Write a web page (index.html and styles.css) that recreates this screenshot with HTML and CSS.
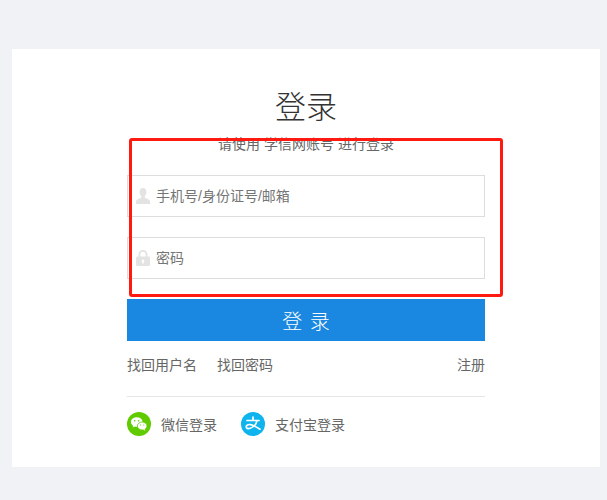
FILE: index.html
```html
<!DOCTYPE html>
<html lang="zh-CN">
<head>
<meta charset="utf-8">
<title>登录</title>
<link rel="stylesheet" href="styles.css">
</head>
<body>
<main class="card">
  <h1 class="title">登录</h1>
  <p class="subtitle">请使用 学信网账号 进行登录</p>
  <form class="form">
    <label class="field">
      <svg class="field-icon" viewBox="0 0 14 16" width="14" height="16"><path fill="#e3e3e3" d="M7 0C4.900 0 3.600 1.700 3.600 3.900c0 1.700.7 3.200 1.600 4v1.300c0 .5-.4.8-1 1.100C2.300 11 .3 11.700 0 13.300V16h14v-2.700c-.3-1.600-2.300-2.300-4.200-3-.6-.3-1-.6-1-1.100V7.900c.9-.8 1.600-2.300 1.600-4C10.400 1.700 9.100 0 7 0z"/></svg>
      <input class="input" type="text" placeholder="手机号/身份证号/邮箱">
    </label>
    <label class="field">
      <svg class="field-icon" viewBox="0 0 14 16" width="14" height="16"><path fill="#e3e3e3" fill-rule="evenodd" d="M7 0C4.300 0 2.500 1.900 2.500 4.500V6.500H1.500C.7 6.500 0 7.100 0 8v6.500C0 15.400.7 16 1.500 16h11c.8 0 1.500-.6 1.500-1.500V8c0-.9-.7-1.500-1.500-1.500h-1V4.500C11.500 1.900 9.700 0 7 0zM4.300 6.500V4.500C4.300 2.900 5.400 1.700 7 1.700s2.700 1.200 2.700 2.800v2H4.300zM7 9.500a1.300 1.300 0 0 1 .7 2.400V13.500H6.300v-1.600A1.300 1.300 0 0 1 7 9.500z"/></svg>
      <input class="input" type="password" placeholder="密码">
    </label>
    <button class="submit" type="button">登 录</button>
  </form>
  <nav class="links">
    <a class="link" href="#">找回用户名</a>
    <a class="link" href="#">找回密码</a>
    <a class="link link-end" href="#">注册</a>
  </nav>
  <div class="social">
    <a class="social-item" href="#">
      <svg class="social-icon" viewBox="0 0 24 24" width="24" height="24">
        <circle cx="12" cy="12" r="12" fill="#5fcb00"/>
        <ellipse cx="9.700" cy="10" rx="5.800" ry="4.800" fill="#fff"/>
        <path fill="#fff" d="M6.500 13l-.8 2.400 2.800-1.300z"/>
        <ellipse cx="15.200" cy="14" rx="4.800" ry="4" fill="#fff" stroke="#5fcb00" stroke-width=".8"/>
        <path fill="#fff" d="M17.500 17l.8 1.800-2.400-1.100z"/>
        <circle cx="7.700" cy="8.700" r=".8" fill="#5fcb00"/>
        <circle cx="11.600" cy="8.700" r=".8" fill="#5fcb00"/>
        <circle cx="13.600" cy="13" r=".6" fill="#5fcb00"/>
        <circle cx="16.800" cy="13" r=".6" fill="#5fcb00"/>
      </svg>
      <span>微信登录</span>
    </a>
    <a class="social-item" href="#">
      <svg class="social-icon" viewBox="0 0 24 24" width="24" height="24">
        <circle cx="12" cy="12" r="12" fill="#0fb4ee"/>
        <path fill="none" stroke="#fff" stroke-width="1.700" stroke-linecap="round" d="M6 8.500h12M12 5v3.500M16 8.700c-.9 3.600-3.600 6.600-6.900 7.600-2.200.7-3.900 0-3.900-1.500 0-1.700 2-2.600 4.300-2.200 3.200.6 6.500 2.700 9.500 4.600"/>
      </svg>
      <span>支付宝登录</span>
    </a>
  </div>
</main>
<div class="annotation"></div>
</body>
</html>
```

FILE: styles.css
```css
* {
  box-sizing: border-box;
}

html,
body {
  margin: 0;
  height: 500px;
  overflow: hidden;
}

body {
  position: relative;
  padding: 49px 7px 0 12px;
  background: #f0f2f5;
  font-family: "Liberation Sans", "Noto Sans CJK SC", sans-serif;
  color: #666;
}

.card {
  height: 418px;
  padding: 41px 115px 0;
  background: #fff;
}

.title {
  margin: 0;
  height: 36px;
  font-size: 31px;
  line-height: 36px;
  font-weight: 300;
  text-align: center;
  color: #333;
}

.subtitle {
  margin: 11px 0 0;
  height: 14px;
  font-size: 14px;
  line-height: 14px;
  text-align: center;
  color: #666;
}

.form {
  display: flex;
  flex-direction: column;
  margin-top: 24px;
}

.field {
  display: flex;
  align-items: center;
  height: 42px;
  margin-bottom: 20px;
  padding-left: 8px;
  border: 1px solid #ddd;
}

.field-icon {
  flex: none;
}

.input {
  flex: 1;
  min-width: 0;
  height: 100%;
  margin-left: 6px;
  padding: 0;
  border: 0;
  outline: 0;
  background: transparent;
  font: inherit;
  font-size: 14px;
  color: #666;
}

.input::placeholder {
  color: #757575;
  opacity: 1;
}

.submit {
  height: 42px;
  border: 0;
  background: #1a88e0;
  color: #fff;
  font: inherit;
  font-size: 20px;
  font-weight: 300;
  word-spacing: 2px;
}

.links {
  display: flex;
  gap: 20px;
  margin-top: 14px;
  height: 20px;
  font-size: 14px;
  line-height: 20px;
}

.link {
  color: #666;
  text-decoration: none;
}

.link-end {
  margin-left: auto;
}

.social {
  display: flex;
  gap: 24px;
  margin-top: 21px;
  padding-top: 15px;
  border-top: 1px solid #e5e5e5;
  font-size: 14px;
}

.social-item {
  display: flex;
  align-items: center;
  gap: 10px;
  color: #666;
  text-decoration: none;
}

.social-icon {
  flex: none;
}

.annotation {
  position: absolute;
  left: 129px;
  top: 138px;
  width: 374px;
  height: 159px;
  border: 3px solid #fe1a10;
  border-radius: 3px;
  pointer-events: none;
}
```
